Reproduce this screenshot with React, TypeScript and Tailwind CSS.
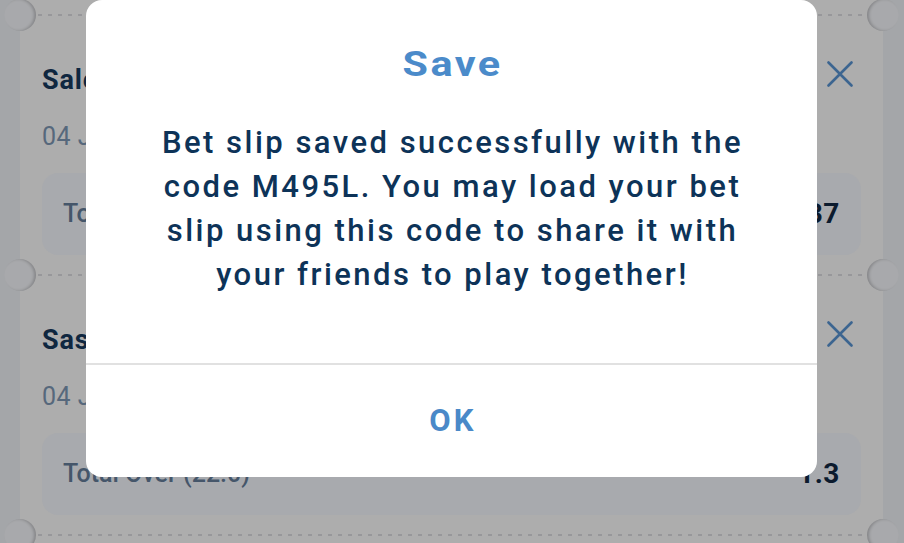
import React from "react";

function XIcon() {
  return (
    <svg width="26" height="26" viewBox="0 0 26 26" className="block">
      <path d="M1.5 1.5 L24.5 24.5 M24.5 1.5 L1.5 24.5" stroke="#3c6590" strokeWidth="2.6" strokeLinecap="round" fill="none" />
    </svg>
  );
}

function Separator() {
  return (
    <div className="absolute left-0 right-0 top-0 h-0">
      <div className="absolute left-[-16px] top-[-16px] w-[32px] h-[32px] rounded-full bg-[#a8a9ac] shadow-[inset_-2px_0_3px_rgba(0,0,0,0.2)]" />
      <div className="absolute right-[-16px] top-[-16px] w-[32px] h-[32px] rounded-full bg-[#a8a9ac] shadow-[inset_2px_0_3px_rgba(0,0,0,0.2)]" />
      <div className="absolute left-[18px] right-[18px] top-[-1px] h-[2px] bg-[repeating-linear-gradient(90deg,#97979a_0_4px,transparent_4px_10px)]" />
    </div>
  );
}

function Segment({ title, date, market, odds }: { title: string; date: string; market: string; odds: string }) {
  return (
    <div className="relative">
      <Separator />
      <div className="px-[22px] pt-[50px] pb-[20px]">
        <div className="flex justify-between">
          <div className="text-[27px] leading-[30px] font-bold text-[#0f2740] tracking-[0.03em]">{title}</div>
          <div className="-mt-[4px] mr-[8px]">
            <XIcon />
          </div>
        </div>
        <div className="mt-[27px] text-[25px] leading-[30px] text-[#56687c] tracking-[0.02em]">{date}</div>
        <div className="mt-[21px] h-[82px] rounded-[16px] bg-[#a8aaae] flex items-center justify-between pl-[21px] pr-[21px]">
          <span className="text-[25px] font-medium text-[#45566a]">{market}</span>
          <span className="text-[28px] font-bold text-[#0c1b2e] tracking-[0.02em]">{odds}</span>
        </div>
      </div>
    </div>
  );
}

export default function App() {
  return (
    <div className="relative w-[904px] h-[543px] overflow-hidden bg-[#a4a6a9] [font-family:Roboto,'Liberation_Sans',sans-serif]">
      <div className="ml-[20px] w-[863px] h-full bg-[#adadad] relative">
        <div className="h-[15px]" />
        <Segment title="Saleh United - Hilal" date="04 Jan 2025, 19:30" market="Total Under (22.5)" odds="1.37" />
        <Segment title="Sasa FC - Riverside" date="04 Jan 2025, 21:00" market="Total Over (22.0)" odds="1.3" />
        <div className="relative">
          <Separator />
        </div>
      </div>

      <div className="absolute left-[86px] top-0 w-[731px] h-[477px] bg-white rounded-[16px] flex flex-col">
        <div className="pt-[45px] flex justify-center">
          <div className="text-[35px] leading-[40px] font-bold text-[#4b8bca] tracking-[0.06em] pl-[2px] scale-x-[1.18]">Save</div>
        </div>
        <div className="mt-[36px] pl-[2px] text-center text-[31px] leading-[44px] font-medium text-[#0d3358] tracking-[0.08em]">
          <div className="whitespace-nowrap">Bet slip saved successfully with the</div>
          <div className="whitespace-nowrap">code M495L. You may load your bet</div>
          <div className="whitespace-nowrap">slip using this code to share it with</div>
          <div className="whitespace-nowrap">your friends to play together!</div>
        </div>
        <div className="mt-[66px] h-[2px] bg-[#e1e1e1]" />
        <div className="h-[112px] pl-[3px] flex items-center justify-center text-[31px] font-bold text-[#4a89c8] tracking-[0.1em]">OK</div>
      </div>
    </div>
  );
}
